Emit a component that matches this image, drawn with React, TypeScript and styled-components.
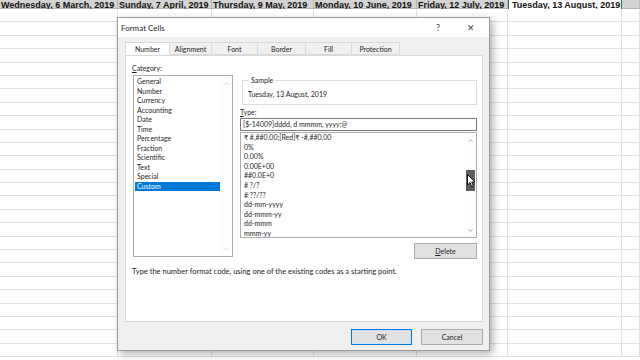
import React from 'react';
import styled, { createGlobalStyle } from 'styled-components';
import { ChevronUp, ChevronDown } from 'lucide-react';

const Global = createGlobalStyle`
    html, body { margin: 0; padding: 0; background: #fff; }
    * { box-sizing: border-box; }
`;

const UI = '"Lato", "Noto Sans", sans-serif';

const Sheet = styled.div`
    position: relative;
    width: 640px;
    height: 360px;
    overflow: hidden;
    background: #fff;
`;

const HeadRow = styled.div`
    display: flex;
    height: 9px;
    background: #d3d3d3;
    border-bottom: 1px solid #b4b4b4;
`;

const HeadCell = styled.div<{ $w: number; $active?: boolean }>`
    flex: none;
    width: ${p => p.$w}px;
    height: 9px;
    display: flex;
    align-items: flex-end;
    overflow: hidden;
    white-space: nowrap;
    padding-left: ${p => (p.$active ? 3 : 1)}px;
    font-family: "Liberation Sans", Arial, sans-serif;
    font-weight: bold;
    font-size: 9px;
    line-height: 9px;
    color: #111;
    background: ${p => (p.$active ? '#fff' : 'transparent')};
    border-right: 1px solid ${p => (p.$active ? '#217346' : '#b9b9b9')};
    border-left: ${p => (p.$active ? '1px solid #217346' : 'none')};
    span { margin-bottom: -1px; }
`;

const GridRow = styled.div`
    display: flex;
    height: 13.4px;
    border-bottom: 1px solid #e1e1e1;
`;

const GridCell = styled.div<{ $w: number }>`
    flex: none;
    width: ${p => p.$w}px;
    border-right: 1px solid #e1e1e1;
`;

const Dialog = styled.div`
    position: absolute;
    left: 117px;
    top: 17px;
    width: 373px;
    height: 334px;
    border: 1px solid #9a9a9a;
    background: #f0f0f0;
    box-shadow: 3px 3px 8px rgba(0, 0, 0, 0.3);
    font-family: ${UI};
    color: #1e1e1e;
    display: flex;
    flex-direction: column;
`;

const TitleBar = styled.div`
    height: 20px;
    background: #fff;
    display: flex;
    align-items: center;
    padding: 0 0 0 3px;
    font-size: 8px;
`;

const Title = styled.div`
    flex: 1;
`;

const TitleButton = styled.div<{ $w: number }>`
    width: ${p => p.$w}px;
    text-align: center;
    font-size: 9px;
    color: #444;
`;

const Body = styled.div`
    flex: 1;
    padding: 5px 6px 5px 7px;
    display: flex;
    flex-direction: column;
`;

const Tabs = styled.div`
    display: flex;
    height: 13px;
`;

const Tab = styled.div<{ $w: number; $on?: boolean }>`
    width: ${p => p.$w}px;
    height: 13px;
    display: flex;
    align-items: center;
    justify-content: center;
    font-size: 7px;
    background: ${p => (p.$on ? '#fff' : '#f0f0f0')};
    border: 1px solid #d9d9d9;
    border-left: ${p => (p.$on ? '1px solid #d9d9d9' : 'none')};
    border-bottom: ${p => (p.$on ? '1px solid #fff' : '1px solid #d9d9d9')};
    margin-bottom: -1px;
    position: relative;
    z-index: ${p => (p.$on ? 1 : 0)};
`;

const Panel = styled.div`
    height: 267px;
    background: #fff;
    border: 1px solid #d9d9d9;
    padding: 8px 6px 0 6px;
    font-size: 7px;
`;

const Columns = styled.div`
    display: grid;
    grid-template-columns: 101px 237px;
    column-gap: 7px;
`;

const Column = styled.div<{ $top?: number }>`
    display: flex;
    flex-direction: column;
    margin-top: ${p => p.$top ?? 0}px;
`;

const Label = styled.div`
    line-height: 8px;
    height: 8px;
    u { text-decoration: underline; }
`;

const ListBox = styled.div<{ $h: number }>`
    position: relative;
    height: ${p => p.$h}px;
    border: 1px solid #acacac;
    display: flex;
    background: #fff;
`;

const Items = styled.div<{ $pad: number }>`
    flex: 1;
    padding: ${p => p.$pad}px 0 0 1px;
    overflow: hidden;
`;

const Item = styled.div<{ $sel?: boolean; $lh: number }>`
    height: ${p => p.$lh}px;
    line-height: ${p => p.$lh}px;
    padding-left: 2px;
    white-space: nowrap;
    background: ${p => (p.$sel ? '#0078d7' : 'transparent')};
    color: ${p => (p.$sel ? '#fff' : '#1e1e1e')};
`;

const ScrollBar = styled.div`
    width: 12px;
    display: flex;
    flex-direction: column;
    align-items: center;
    justify-content: space-between;
    background: #fdfdfd;
    padding: 4px 0 3px;
`;

const Thumb = styled.div`
    width: 9px;
    height: 21px;
    background: #5e5e5e;
    margin-top: 26px;
`;

const Spacer = styled.div`
    flex: 1;
`;

const Group = styled.fieldset`
    margin: 0 0 0 2px;
    padding: 6px 0 6px 5px;
    border: 1px solid #dcdcdc;
    min-width: 0;
    legend {
        padding: 0 2px;
        margin-left: 1px;
        line-height: 8px;
        font-size: 7px;
    }
`;

const Sample = styled.div`
    line-height: 8px;
`;

const TypeInput = styled.div`
    margin-top: 2px;
    height: 13px;
    border: 1px solid #7a7a7a;
    line-height: 11px;
    padding-left: 2px;
    white-space: nowrap;
    background: #fff;
`;

const Button = styled.div<{ $w: number; $default?: boolean }>`
    width: ${p => p.$w}px;
    height: 16px;
    background: #e1e1e1;
    border: 1px solid ${p => (p.$default ? '#0078d7' : '#adadad')};
    box-shadow: ${p => (p.$default ? 'inset 0 0 0 1px #cfe3f6' : 'none')};
    display: flex;
    align-items: center;
    justify-content: center;
    font-size: 7px;
    color: #1e1e1e;
    u { text-decoration: underline; }
`;

const RightButtonRow = styled.div`
    display: flex;
    justify-content: flex-end;
    margin-top: 5px;
`;

const Hint = styled.div`
    margin-top: 9px;
    line-height: 8px;
    font-size: 7.5px;
`;

const Footer = styled.div`
    display: flex;
    justify-content: flex-end;
    gap: 9px;
    margin-top: 7px;
`;

const Cursor = styled.svg`
    position: absolute;
    left: 467px;
    top: 174px;
`;

const colWidths = [118, 94, 102, 103, 91, 114, 18];
const headers = [
    'Wednesday, 6 March, 2019',
    'Sunday, 7 April, 2019',
    'Thursday, 9 May, 2019',
    'Monday, 10 June, 2019',
    'Friday, 12 July, 2019',
    'Tuesday, 13 August, 2019',
    '',
];

const categories = ['General', 'Number', 'Currency', 'Accounting', 'Date', 'Time', 'Percentage', 'Fraction', 'Scientific', 'Text', 'Special', 'Custom'];

const formats = [
    '₹ #,##0.00;[Red]₹ -#,##0.00',
    '0%',
    '0.00%',
    '0.00E+00',
    '##0.0E+0',
    '# ?/?',
    '# ??/??',
    'dd-mm-yyyy',
    'dd-mmm-yy',
    'dd-mmm',
    'mmm-yy',
];

const tabs: [string, number][] = [
    ['Number', 45],
    ['Alignment', 42],
    ['Font', 46],
    ['Border', 48],
    ['Fill', 46],
    ['Protection', 48],
];

export default function App() {
    return (
        <Sheet>
            <Global />
            <HeadRow>
                {headers.map((h, i) => (
                    <HeadCell key={i} $w={colWidths[i]} $active={i === 5}>
                        <span>{h}</span>
                    </HeadCell>
                ))}
            </HeadRow>
            {Array.from({ length: 26 }).map((_, r) => (
                <GridRow key={r}>
                    {colWidths.map((w, i) => <GridCell key={i} $w={w} />)}
                </GridRow>
            ))}

            <Dialog>
                <TitleBar>
                    <Title>Format Cells</Title>
                    <TitleButton $w={30}>?</TitleButton>
                    <TitleButton $w={36}>✕</TitleButton>
                </TitleBar>
                <Body>
                    <Tabs>
                        {tabs.map(([t, w], i) => (
                            <Tab key={t} $w={w} $on={i === 0}>{t}</Tab>
                        ))}
                    </Tabs>
                    <Panel>
                        <Columns>
                            <Column>
                                <Label><u>C</u>ategory:</Label>
                                <ListBox $h={182} style={{ marginTop: 3, marginLeft: 1 }}>
                                    <Items $pad={1}>
                                        {categories.map(c => (
                                            <Item key={c} $lh={9.5} $sel={c === 'Custom'}>{c}</Item>
                                        ))}
                                    </Items>
                                    <ScrollBar>
                                        <ChevronUp size={7} color="#b5b5b5" strokeWidth={2} />
                                        <ChevronDown size={7} color="#b5b5b5" strokeWidth={2} />
                                    </ScrollBar>
                                </ListBox>
                            </Column>
                            <Column $top={12}>
                                <Group>
                                    <legend>Sample</legend>
                                    <Sample>Tuesday, 13 August, 2019</Sample>
                                </Group>
                                <Label style={{ marginTop: 3 }}><u>T</u>ype:</Label>
                                <TypeInput>[$-14009]dddd, d mmmm, yyyy;@</TypeInput>
                                <ListBox $h={106} style={{ marginTop: 1 }}>
                                    <Items $pad={0}>
                                        {formats.map(f => (
                                            <Item key={f} $lh={9.6}>{f}</Item>
                                        ))}
                                    </Items>
                                    <ScrollBar>
                                        <ChevronUp size={7} color="#606060" strokeWidth={2} />
                                        <Thumb />
                                        <Spacer />
                                        <ChevronDown size={7} color="#606060" strokeWidth={2} />
                                    </ScrollBar>
                                </ListBox>
                                <RightButtonRow>
                                    <Button $w={63}><u>D</u>elete</Button>
                                </RightButtonRow>
                            </Column>
                        </Columns>
                        <Hint>Type the number format code, using one of the existing codes as a starting point.</Hint>
                    </Panel>
                    <Footer>
                        <Button $w={61} $default>OK</Button>
                        <Button $w={62}>Cancel</Button>
                    </Footer>
                </Body>
            </Dialog>

            <Cursor width="9" height="14" viewBox="0 0 9 14">
                <path d="M0.5 0.5 L0.5 11 L3 8.6 L4.8 12.8 L6.4 12.1 L4.7 8 L8 8 Z" fill="#fff" stroke="#000" strokeWidth="0.9" strokeLinejoin="round" />
            </Cursor>
        </Sheet>
    );
}
